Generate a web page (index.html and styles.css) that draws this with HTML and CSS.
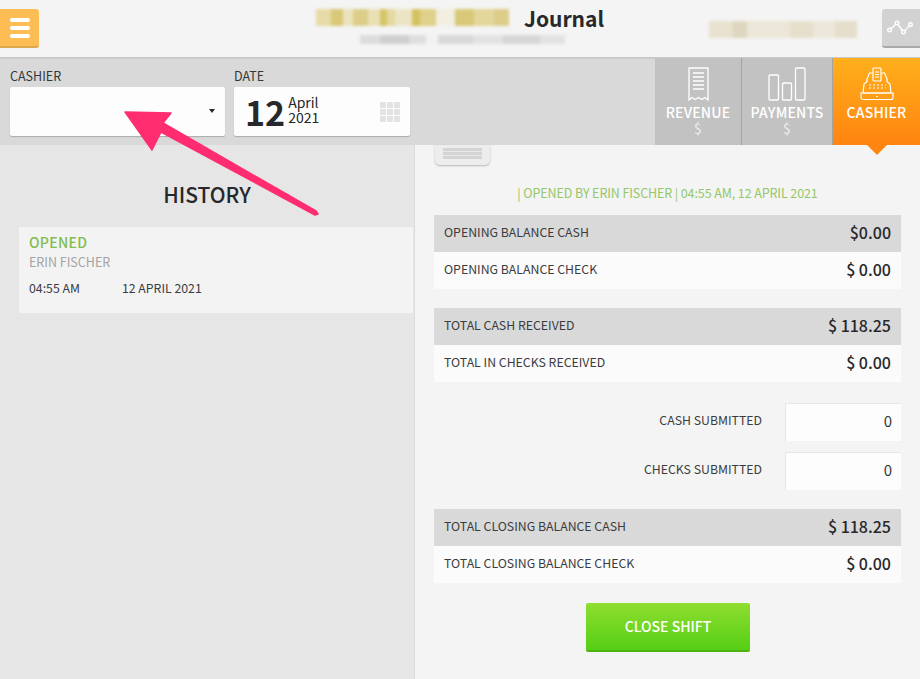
FILE: index.html
```html
<!DOCTYPE html>
<html lang="en">
<head>
  <meta charset="UTF-8" />
  <title>Journal</title>
  <link rel="stylesheet" href="styles.css">
</head>
<body>
  <header class="topbar">
    <button class="menu-btn" aria-label="Menu">
      <span></span><span></span><span></span>
    </button>
    <div class="title-block">
      <div class="title-line">
        <span class="smudge smudge-hotel"></span>
        <h1>Journal</h1>
      </div>
      <span class="smudge smudge-sub"></span>
    </div>
    <span class="smudge smudge-user"></span>
    <button class="graph-btn" aria-label="Graph">
      <svg width="26" height="16" viewBox="0 0 26 16" fill="none" stroke="#fff" stroke-width="1.4">
        <circle cx="2.5" cy="10" r="1.8" />
        <circle cx="10" cy="3" r="1.8" />
        <circle cx="16.5" cy="12" r="1.8" />
        <circle cx="23.5" cy="4.5" r="1.8" />
        <path d="M4 8.7 8.6 4.2M11 4.5l4.4 6M18 10.6l4.2-4.7" />
      </svg>
    </button>
  </header>

  <section class="toolbar">
    <div class="field field-cashier">
      <label>CASHIER</label>
      <div class="select-box"><span class="caret"></span></div>
    </div>
    <div class="field field-date">
      <label>DATE</label>
      <div class="date-box">
        <span class="date-day">12</span>
        <span class="date-rest">April<br>2021</span>
        <span class="date-grid">
          <i></i><i></i><i></i><i></i><i></i><i></i><i></i><i></i><i></i>
        </span>
      </div>
    </div>
    <nav class="tabs">
      <a class="tab tab-revenue">
        <svg width="21" height="34" viewBox="0 0 21 34" fill="none" stroke="#fff" stroke-width="1.3">
          <path d="M1 1h19v32l-3-2.500-3.200 2-3.300-2-3.300 2-3.200-2L1 33z" />
          <path d="M5 6h11M5 10h11M5 14h11M5 18h11M5 22h11" />
        </svg>
        <span class="tab-name">REVENUE</span>
        <span class="tab-sum">$</span>
      </a>
      <a class="tab tab-payments">
        <svg width="38" height="34" viewBox="0 0 38 34" fill="none" stroke="#fff" stroke-width="1.3">
          <rect x="1" y="8" width="9.500" height="25" rx="1" />
          <rect x="14.500" y="16" width="9" height="17" rx="1" />
          <rect x="27.500" y="1" width="9.500" height="32" rx="1" />
        </svg>
        <span class="tab-name">PAYMENTS</span>
        <span class="tab-sum">$</span>
      </a>
      <a class="tab tab-cashier">
        <svg width="34" height="34" viewBox="0 0 34 34" fill="none" stroke="#fff" stroke-width="1.200">
          <rect x="13" y="1" width="8" height="13" rx="1" />
          <path d="M15 5h4M15 7.500h4M15 10h4" />
          <path d="M13 6H9.500L7 12v2.500L4 17l-1 9h28l-1-9-3-2.500V12l-2.500-6H21" />
          <path d="M1 26h32v4.500a2 2 0 0 1-2 2H3a2 2 0 0 1-2-2z" />
          <path d="M9 18h2M13 18h2M17 18h2M21 18h2M25 18h1M9 21h2M13 21h2M17 21h2M21 21h2M25 21h1M16 29.500h2" />
        </svg>
        <span class="tab-name">CASHIER</span>
      </a>
    </nav>
  </section>

  <main class="content">
    <aside class="history">
      <h2>HISTORY</h2>
      <div class="history-item">
        <div class="history-state">OPENED</div>
        <div class="history-who">ERIN FISCHER</div>
        <div class="history-when">
          <span>04:55 AM</span>
          <span>12 APRIL 2021</span>
        </div>
      </div>
    </aside>

    <section class="shift">
      <div class="drawer-handle"><span></span></div>
      <p class="opened-line">| OPENED BY ERIN FISCHER | 04:55 AM, 12 APRIL 2021</p>

      <div class="row row-dark"><span>OPENING BALANCE CASH</span><b>$0.00</b></div>
      <div class="row"><span>OPENING BALANCE CHECK</span><b>$ 0.00</b></div>

      <div class="row row-dark row-gap"><span>TOTAL CASH RECEIVED</span><b>$ 118.25</b></div>
      <div class="row"><span>TOTAL IN CHECKS RECEIVED</span><b>$ 0.00</b></div>

      <div class="submit-row submit-first">
        <span>CASH SUBMITTED</span>
        <input type="text" value="0" />
      </div>
      <div class="submit-row">
        <span>CHECKS SUBMITTED</span>
        <input type="text" value="0" />
      </div>

      <div class="row row-dark row-gap"><span>TOTAL CLOSING BALANCE CASH</span><b>$ 118.25</b></div>
      <div class="row"><span>TOTAL CLOSING BALANCE CHECK</span><b>$ 0.00</b></div>

      <button class="close-btn">CLOSE SHIFT</button>
    </section>
  </main>

  <svg class="arrow" width="920" height="679" viewBox="0 0 920 679">
    <path d="M125 112 171 113 163 123 316 211 318 214 315 215 161 132 152 150z" fill="#ff2d6f" stroke="#ff2d6f" stroke-width="1.500" stroke-linejoin="round" />
  </svg>
</body>
</html>
```

FILE: styles.css
```css
* {
  box-sizing: border-box;
}
html, body {
  margin: 0;
  height: 679px;
  overflow: hidden;
}
body {
  position: relative;
  font-family: "Noto Sans CJK SC", "Noto Sans", sans-serif;
  color: #26282b;
  background: #f4f4f4;
}

/* top bar */
.topbar {
  height: 59px;
  display: flex;
  align-items: flex-start;
  background: #f4f4f4;
  border-bottom: 2px solid #c9c9c9;
}
.menu-btn {
  flex: none;
  width: 39px;
  height: 39px;
  margin-top: 9px;
  padding: 0 9px 0 10px;
  display: flex;
  flex-direction: column;
  justify-content: center;
  gap: 4px;
  border: 0;
  border-bottom: 2px solid #dba84e;
  border-radius: 0 3px 3px 0;
  background: #fdbd55;
}
.menu-btn span {
  display: block;
  height: 4px;
  border-radius: 2px;
  background: #fff;
}
.title-block {
  flex: none;
  width: 288px;
  margin-left: 277px;
}
.title-line {
  display: flex;
  align-items: center;
  height: 31px;
  padding-top: 4px;
}
h1 {
  margin: 0 0 0 15px;
  font-size: 21px;
  line-height: 24px;
  font-weight: 700;
}
.smudge {
  display: block;
  flex: none;
  filter: blur(1.5px);
}
.smudge-hotel {
  width: 193px;
  height: 17px;
  background: linear-gradient(90deg, #e6dba6 0 8%, #d9c878 8% 14%, #ebe3bc 14% 19%, #dccd88 19% 27%, #e9e0b4 27% 33%, #d6c468 33% 37%, #e4d99f 37% 41%, #ece5c4 41% 50%, #d4c160 50% 54%, #dfd08a 54% 62%, #f2eee0 62% 72%, #d9c878 72% 82%, #e3d79c 82% 92%, #dccd88 92% 100%);
}
.smudge-sub {
  width: 205px;
  height: 9px;
  margin: 4px 0 0 44px;
  background: linear-gradient(90deg, #dcdcdc 0 10%, #cfcfcf 10% 24%, #dedede 24% 32%, #f2f2f2 32% 38%, #d8d8d8 38% 55%, #e2e2e2 55% 70%, #d6d6d6 70% 88%, #e2e2e2 88% 100%);
}
.smudge-user {
  width: 148px;
  height: 17px;
  margin: 21px 0 0 105px;
  background: linear-gradient(90deg, #e8e1cf 0 16%, #ded6bf 16% 26%, #ebe6d8 26% 55%, #e6dfcc 55% 70%, #ece7da 70% 85%, #e5decb 85% 100%);
}
.graph-btn {
  flex: none;
  width: 38px;
  height: 39px;
  margin: 9px 0 0 auto;
  padding: 0 0 0 5px;
  display: flex;
  align-items: center;
  border: 0;
  border-bottom: 2px solid #a9a9a9;
  border-radius: 3px 0 0 3px;
  background: #d2d2d2;
}

/* cashier / date strip */
.toolbar {
  height: 86px;
  display: flex;
  background: #d9d9d9;
}
.field label {
  display: block;
  height: 28px;
  padding-top: 8px;
  font-size: 12.500px;
  line-height: 18px;
  color: #34373a;
}
.field-cashier {
  width: 215px;
  margin-left: 10px;
}
.field-date {
  width: 176px;
  margin-left: 9px;
}
.select-box, .date-box {
  position: relative;
  height: 49px;
  background: #fdfdfd;
  border-radius: 2px;
  box-shadow: 0 1px 1px #aaa;
}
.caret {
  position: absolute;
  right: 10px;
  top: 22px;
  border: 3px solid transparent;
  border-top: 4px solid #26282b;
  border-bottom: 0;
}
.date-box {
  display: flex;
  align-items: center;
  padding-left: 11px;
}
.date-day {
  font-size: 34px;
  line-height: 40px;
  font-weight: 700;
}
.date-rest {
  margin-left: 3px;
  padding-bottom: 4px;
  font-size: 14px;
  line-height: 15px;
}
.date-grid {
  position: absolute;
  right: 10px;
  top: 15px;
  width: 20px;
  display: grid;
  grid-template-columns: repeat(3, 6px);
  gap: 1px;
}
.date-grid i {
  height: 6px;
  border-radius: 1px;
  background: #e2e2e2;
}
.tabs {
  margin-left: auto;
  display: flex;
  align-self: stretch;
  margin-top: -1px;
}
.tab {
  position: relative;
  display: flex;
  flex-direction: column;
  align-items: center;
  padding-top: 9px;
  color: #fff;
  background: #c2c2c2;
}
.tab svg {
  display: block;
  flex: none;
}
.tab-revenue {
  width: 87px;
  border-right: 1px solid #a3a3a3;
}
.tab-payments {
  width: 91px;
  border-right: 1px solid #a3a3a3;
}
.tab-cashier {
  width: 87px;
  background: linear-gradient(#ffb01c, #ff8410);
}
.tab-cashier::after {
  content: "";
  position: absolute;
  left: 34px;
  bottom: -10px;
  border: 10px solid transparent;
  border-top: 10px solid #ff8612;
  border-bottom: 0;
}
.tab-name {
  margin-top: 2px;
  font-size: 14px;
  line-height: 18px;
  font-weight: 500;
  letter-spacing: 0.2px;
}
.tab-sum {
  font-size: 14px;
  line-height: 15px;
  opacity: 0.75;
}

/* lower panels */
.content {
  height: 534px;
  display: flex;
}
.history {
  width: 415px;
  flex: none;
  padding-left: 19px;
  background: #e6e6e6;
  border-right: 1px solid #dcdcdc;
}
.history h2 {
  margin: 35px 0 19px;
  padding-right: 19px;
  text-align: center;
  font-size: 21px;
  line-height: 28px;
  font-weight: 500;
}
.history-item {
  height: 86px;
  margin-right: 1px;
  padding: 6px 10px;
  background: #f3f3f3;
}
.history-state {
  font-size: 14px;
  line-height: 19px;
  font-weight: 500;
  letter-spacing: 0.3px;
  color: #80bd4e;
}
.history-who {
  font-size: 12.500px;
  line-height: 19px;
  color: #a3a3a3;
}
.history-when {
  display: flex;
  gap: 42px;
  margin-top: 8px;
  font-size: 12.300px;
  line-height: 18px;
  color: #3a3c3e;
}
.shift {
  position: relative;
  width: 505px;
  padding: 0 19px 0 19px;
}
.drawer-handle {
  position: absolute;
  left: 20px;
  top: 0;
  width: 55px;
  height: 20px;
  padding: 3px 8px;
  background: #ededed;
  border-radius: 0 0 5px 5px;
  box-shadow: 0 1px 2px #b5b5b5;
}
.drawer-handle span {
  display: block;
  height: 11px;
  background: repeating-linear-gradient(#d4d4d4 0 3px, #e8e8e8 3px 4px);
}
.opened-line {
  margin: 0;
  padding-top: 38px;
  height: 70px;
  text-align: center;
  font-size: 12.500px;
  line-height: 20px;
  letter-spacing: -0.1px;
  color: #93c76a;
}
.row {
  height: 37px;
  display: flex;
  align-items: center;
  justify-content: space-between;
  padding: 0 10px 3px;
  font-size: 12.300px;
  color: #3a3c3e;
  background: #fbfbfb;
}
.row b {
  font-size: 16px;
  font-weight: 500;
  color: #26282b;
}
.row-dark {
  background: #d9d9d9;
}
.row-gap {
  margin-top: 19px;
}
.submit-row {
  display: flex;
  align-items: center;
  justify-content: flex-end;
  gap: 23px;
  height: 38px;
  margin-top: 11px;
  font-size: 12.300px;
  color: #3a3c3e;
}
.submit-row span {
  padding-bottom: 4px;
}
.submit-first {
  margin-top: 21px;
}
.submit-row input {
  width: 116px;
  height: 38px;
  padding: 0 9px 5px 0;
  text-align: right;
  font: inherit;
  font-size: 15px;
  color: #34373a;
  background: #fdfdfd;
  border: 0;
  border-top: 1px solid #e6e6e6;
  border-left: 1px solid #e6e6e6;
}
.close-btn {
  display: block;
  width: 164px;
  height: 49px;
  margin: 20px 0 0 152px;
  padding-bottom: 2px;
  border: 0;
  border-bottom: 2px solid #4db312;
  border-radius: 2px;
  font: inherit;
  font-size: 14px;
  font-weight: 500;
  color: #fff;
  background: linear-gradient(#8fde30, #56cf14);
}

/* pink annotation drawn over the screenshot */
.arrow {
  position: absolute;
  left: 0;
  top: 0;
  pointer-events: none;
}
```
